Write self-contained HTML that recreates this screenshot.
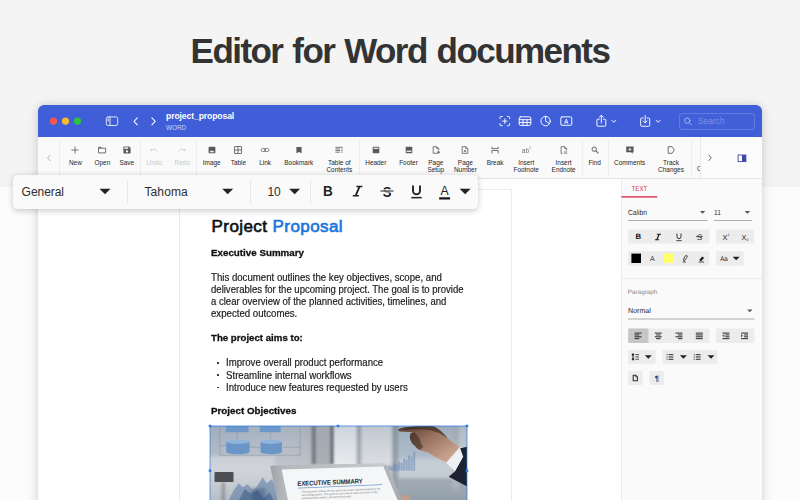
<!DOCTYPE html>
<html lang="en">
<head>
<meta charset="utf-8">
<title>Editor for Word documents</title>
<style>
*{box-sizing:border-box;margin:0;padding:0}
html,body{width:800px;height:500px;overflow:hidden}
body{position:relative;background:#fcfcfc;font-family:"Liberation Sans",sans-serif;color:#333}
.abs{position:absolute}
svg{display:block;overflow:visible}
#topband{left:0;top:0;width:800px;height:187px;background:#f4f4f4}
#hero{left:0;top:29px;width:800px;text-align:center;font-weight:bold;font-size:35px;line-height:44px;color:#333;letter-spacing:-1.55px;word-spacing:1.7px;white-space:nowrap}
#win{left:38px;top:105px;width:724px;height:420px;border-radius:6px 6px 0 0;background:#fff;box-shadow:0 0 8px rgba(0,0,0,.13),0 3px 16px rgba(0,0,0,.07)}
#winclip{left:0;top:0;width:724px;height:420px;border-radius:6px 6px 0 0;overflow:hidden}
#titlebar{left:0;top:0;width:724px;height:31.5px;background:#3f5ed8;color:#fff}
.tl{width:7.2px;height:7.2px;border-radius:50%;top:12.4px}
#fname{left:128px;top:5.5px;font-size:8.6px;line-height:11px;font-weight:bold;letter-spacing:-.1px;white-space:nowrap}
#ftype{left:128px;top:18.5px;font-size:6.4px;line-height:8px;color:rgba(255,255,255,.72);white-space:nowrap}
#search{left:641px;top:8px;width:76px;height:16.5px;border:1px solid rgba(255,255,255,.17);border-radius:3.5px;background:rgba(255,255,255,.02)}
#search span{position:absolute;left:18px;top:2px;font-size:8.4px;line-height:10px;color:rgba(255,255,255,.33)}
#tb{left:0;top:32px;width:724px;height:42px;background:#fafafa;border-bottom:1px solid #e4e4e4}
.ti{position:absolute;top:0;width:0;height:42px;font-size:6.45px;line-height:6.9px;color:#262626;white-space:nowrap;text-align:center}
.ti svg{position:absolute;left:-6px;top:7px;width:12px;height:12px}
.ti span{position:absolute;left:-30px;width:60px;top:22.7px;display:block;text-align:center}
.ti.dis{color:#c9c9c9}
.vd{position:absolute;top:3px;width:1px;height:36px;background:#eeeeee}
.ft{top:10px;line-height:14px;color:#2e2e2e;white-space:nowrap;letter-spacing:-.25px}
.dl{white-space:nowrap;color:#1a1a1a}
.dl.p{-webkit-text-stroke:.18px currentColor}
.dl.h2{font-weight:bold;color:#111;-webkit-text-stroke:.3px currentColor}
.dl.h1{-webkit-text-stroke:.65px currentColor}
</style>
</head>
<body>
<div id="topband" class="abs"></div>
<div id="hero" class="abs">Editor for Word documents</div>
<div id="win" class="abs"><div id="winclip" class="abs">
  <div id="titlebar" class="abs">
    <svg class="abs" style="left:0;top:0" width="724" height="32" viewBox="0 0 724 32" fill="none" stroke="#fff" stroke-width="1" stroke-linecap="round" stroke-linejoin="round">
      <g stroke="none"><circle cx="15.500" cy="16.100" r="3.600" fill="#f7574f"/><circle cx="27.500" cy="16.100" r="3.600" fill="#fbbb2d"/><circle cx="39.500" cy="16.100" r="3.600" fill="#2bc640"/></g>
      <!-- sidebar icon -->
      <g stroke-width=".9" opacity=".9"><rect x="68.3" y="11.9" width="11.4" height="8.6" rx="1.8"/><path d="M72 12v8.4M69.8 14.2h1M69.8 15.8h1"/></g>
      <!-- nav chevrons -->
      <path d="M99.3 12.8L96 16.3l3.3 3.5M113.9 12.8l3.3 3.5-3.3 3.5" stroke-width="1.05"/>
      <!-- viewfinder plus -->
      <g stroke-width=".95"><path d="M462 13.6v-1.2q0-.9.9-.9h1.3M469.4 11.5h1.3q.9 0 .9.9v1.2M471.6 18.6v1.2q0 .9-.9.9h-1.3M464.2 20.7h-1.3q-.9 0-.9-.9v-1.2M466.8 13.9v4.4M464.6 16.1h4.4"/></g>
      <!-- table -->
      <g stroke-width=".95"><rect x="481.2" y="11.8" width="11.6" height="8.6" rx="1.4"/><path d="M481.2 14.7h11.6M481.2 17.5h11.6M485 14.7v5.7M489 14.7v5.7"/></g>
      <!-- pie -->
      <g stroke-width=".95"><circle cx="507.600" cy="16.100" r="4.700"/><path d="M507.600 11.300v4.800l4.100 2.500"/></g>
      <!-- text box -->
      <g stroke-width=".95"><rect x="522.8" y="11.9" width="11" height="8.4" rx="1.2"/><path d="M526.7 18.6l1.6-4.6 1.6 4.6M527.2 17.2h2.2" stroke-width=".8"/></g>
      <!-- share -->
      <g stroke-width=".95"><path d="M561.3 14.2h-1.4q-1 0-1 1v5q0 1 1 1h6.9q1 0 1-1v-5q0-1-1-1h-1.4M563.3 17.8v-7.3M561.4 12.2l1.9-1.9 1.9 1.9"/></g>
      <path d="M574 15.4l1.9 1.9 1.9-1.900" stroke-width="1"/>
      <!-- download -->
      <g stroke-width=".95"><path d="M605.3 13h-1.6q-1 0-1 1v6.300q0 1 1 1h7q1 0 1-1V14q0-1-1-1h-1.600M607.200 10.400v7.400M605.300 16l1.900 1.900 1.900-1.900"/></g>
      <path d="M618.200 15.400l1.900 1.900 1.900-1.900" stroke-width="1"/>
      <!-- magnifier -->
      <g stroke-width=".95" opacity=".55"><circle cx="649.2" cy="15.600" r="2.700"/><path d="M651.200 17.700l2.300 2.300"/></g>
    </svg>
    <div id="fname" class="abs">project_proposal</div>
    <div id="ftype" class="abs">WORD</div>
    <div id="search" class="abs"><span>Search</span></div>
  </div>
  <div id="tb" class="abs">
<div class="vd" style="left:20.5px"></div>
<div class="vd" style="left:102.4px"></div>
<div class="vd" style="left:158.1px"></div>
<div class="vd" style="left:320.9px"></div>
<div class="vd" style="left:544.0px"></div>
<div class="vd" style="left:569.8px"></div>
<div class="vd" style="left:653.4px"></div>
<div class="ti" style="left:37.4px"><svg viewBox="0 0 12 12" fill="none" stroke="#5a5a5a" stroke-width=".85" stroke-linejoin="round" ><path d="M6 2.4v7.200M2.400 6h7.200" stroke-width=".8"/></svg><span>New</span></div>
<div class="ti" style="left:64.4px"><svg viewBox="0 0 12 12" fill="none" stroke="#5a5a5a" stroke-width=".85" stroke-linejoin="round" ><path d="M2.500 3.300h2.400l.9.900h3.800v4.700H2.500z"/><path d="M2.500 4.200h3.300" stroke-width=".9"/></svg><span>Open</span></div>
<div class="ti" style="left:88.8px"><svg viewBox="0 0 12 12" fill="none" stroke="#5a5a5a" stroke-width=".85" stroke-linejoin="round" ><path d="M2.400 3.200q0-.8.800-.8h4.900l1.500 1.500v4.900q0 .8-.8.800H3.200q-.8 0-.8-.8z" fill="#5a5a5a" stroke="none"/><rect x="3.300" y="3.300" width="3.900" height="1.500" fill="#fafafa" stroke="none"/><circle cx="6" cy="7.400" r="1.150" fill="#fafafa" stroke="none"/></svg><span>Save</span></div>
<div class="ti dis" style="left:116.3px"><svg viewBox="0 0 12 12" fill="none" stroke="#cfcfcf" stroke-width=".9"><path d="M3.200 6.300Q6.300 3.600 9.500 7.300"/><path d="M2.300 4.300v2.600h2.600z" fill="#cfcfcf" stroke="none"/></svg><span>Undo</span></div>
<div class="ti dis" style="left:144.3px"><svg viewBox="0 0 12 12" fill="none" stroke="#cfcfcf" stroke-width=".9"><path d="M8.800 6.300Q5.700 3.600 2.500 7.300"/><path d="M9.700 4.300v2.600H7.100z" fill="#cfcfcf" stroke="none"/></svg><span>Redo</span></div>
<div class="ti" style="left:173.7px"><svg viewBox="0 0 12 12" fill="none" stroke="#5a5a5a" stroke-width=".85" stroke-linejoin="round" ><rect x="2.600" y="2.700" width="6.800" height="6.600" rx=".9" fill="#5a5a5a" stroke="none"/><path d="M3.600 8.200l1.500-1.900 1.100 1.300.8-1 1.500 1.600z" fill="#fafafa" stroke="none"/></svg><span>Image</span></div>
<div class="ti" style="left:200.4px"><svg viewBox="0 0 12 12" fill="none" stroke="#5a5a5a" stroke-width=".85" stroke-linejoin="round" ><rect x="2.500" y="2.500" width="7" height="7" rx=".5"/><path d="M6 2.500v7M2.500 6h7"/></svg><span>Table</span></div>
<div class="ti" style="left:227.2px"><svg viewBox="0 0 12 12" fill="none" stroke="#5a5a5a" stroke-width=".85" stroke-linejoin="round" ><rect x="2.200" y="4.500" width="4.300" height="3" rx="1.500" stroke-width=".7"/><rect x="5.500" y="4.500" width="4.300" height="3" rx="1.500" stroke-width=".7"/></svg><span>Link</span></div>
<div class="ti" style="left:260.8px"><svg viewBox="0 0 12 12" fill="none" stroke="#5a5a5a" stroke-width=".85" stroke-linejoin="round" ><path d="M3.400 3.100h5.200v6.100L6 8 3.400 9.200z" fill="#5a5a5a" stroke="none"/></svg><span>Bookmark</span></div>
<div class="ti" style="left:301.3px"><svg viewBox="0 0 12 12" fill="none" stroke="#5a5a5a" stroke-width=".85" stroke-linejoin="round" ><path d="M2.400 3.300h7.200M2.400 4.900h4.600M2.400 6.500h4.600M2.400 8.200h4.600M8.300 4.900h1.300M8.300 6.500h1.300M8.300 8.200h1.300" stroke-width=".8"/></svg><span>Table of<br>Contents</span></div>
<div class="ti" style="left:337.8px"><svg viewBox="0 0 12 12" fill="none" stroke="#5a5a5a" stroke-width=".85" stroke-linejoin="round" ><rect x="2.700" y="2.700" width="6.600" height="6.600" rx=".7" fill="#5a5a5a" stroke="none"/><rect x="3.600" y="3.700" width="4.800" height="1.300" fill="#e8e8e8" stroke="none"/></svg><span>Header</span></div>
<div class="ti" style="left:370.5px"><svg viewBox="0 0 12 12" fill="none" stroke="#5a5a5a" stroke-width=".85" stroke-linejoin="round" ><rect x="2.700" y="2.700" width="6.600" height="6.600" rx=".7" fill="#5a5a5a" stroke="none"/><rect x="3.600" y="6.600" width="4.800" height="1.400" fill="#e8e8e8" stroke="none"/></svg><span>Footer</span></div>
<div class="ti" style="left:397.8px"><svg viewBox="0 0 12 12" fill="none" stroke="#5a5a5a" stroke-width=".85" stroke-linejoin="round" ><path d="M7.600 9.300H3.200V2.700h3.500l2 2v1.800" stroke-width=".8"/><path d="M6.700 2.700v2h2" stroke-width=".7"/><circle cx="8.500" cy="8.300" r="1.250" fill="#5a5a5a" stroke="none" opacity=".85"/></svg><span>Page<br>Setup</span></div>
<div class="ti" style="left:427.4px"><svg viewBox="0 0 12 12" fill="none" stroke="#5a5a5a" stroke-width=".85" stroke-linejoin="round" ><path d="M3.200 2.700h3.600l2 2v4.600H3.200z" stroke-width=".8"/><path d="M6.700 2.700v2h2" stroke-width=".7"/><rect x="4.900" y="6" width="2.200" height="1.900" fill="#5a5a5a" stroke="none" opacity=".7"/></svg><span>Page<br>Number</span></div>
<div class="ti" style="left:457.1px"><svg viewBox="0 0 12 12" fill="none" stroke="#5a5a5a" stroke-width=".85" stroke-linejoin="round" ><path d="M2.900 2.700v1.900h6.300V2.700M2.900 9.500V6.500h6.300v3" stroke-width=".85"/></svg><span>Break</span></div>
<div class="ti" style="left:488.2px"><svg viewBox="0 0 12 12"><text x="1.800" y="8.800" font-family="Liberation Sans,sans-serif" font-size="6.600" fill="#5a5a5a" opacity=".85">ab</text><text x="8.900" y="5.200" font-family="Liberation Sans,sans-serif" font-size="3.600" fill="#5a5a5a">1</text></svg><span>Insert<br>Footnote</span></div>
<div class="ti" style="left:525.6px"><svg viewBox="0 0 12 12" fill="none" stroke="#5a5a5a" stroke-width=".85" stroke-linejoin="round" ><path d="M4.600 9.400H3.100V2.700h3.600l2 2v1.600" stroke-width=".8"/><path d="M6.700 2.700v2h2" stroke-width=".7"/><path d="M5.900 7.400h3.300M5.900 8.500h3.300M5.900 9.600h3.300" stroke-width=".6" opacity=".75"/></svg><span>Insert<br>Endnote</span></div>
<div class="ti" style="left:556.7px"><svg viewBox="0 0 12 12" fill="none" stroke="#5a5a5a" stroke-width=".85" stroke-linejoin="round" ><circle cx="5.200" cy="5.200" r="2.200" stroke-width=".95"/><path d="M6.900 6.900l2.500 2.500" stroke-width="1.050"/></svg><span>Find</span></div>
<div class="ti" style="left:591.6px"><svg viewBox="0 0 12 12" fill="none" stroke="#5a5a5a" stroke-width=".85" stroke-linejoin="round" ><path d="M2.200 2.600h7.400v5.600H8.400l1.200 1.500-3-1.500H2.200z" fill="#5a5a5a" stroke="none"/><path d="M5.900 3.900v3M4.400 5.400h3" stroke="#fafafa" stroke-width=".8"/></svg><span>Comments</span></div>
<div class="ti" style="left:633.0px"><svg viewBox="0 0 12 12" fill="none" stroke="#5a5a5a" stroke-width=".85" stroke-linejoin="round" ><path d="M3.200 2.700h3.900l2.300 3.300-2.300 3.300H3.200z" stroke-width=".85"/></svg><span>Track<br>Changes</span></div>
<div class="ti" style="left:664.5px;width:0"><span style="left:-5.600px;width:8.500px;overflow:hidden;text-align:left;top:28.900px">Compare</span></div>
<svg class="abs" style="left:0;top:0" width="724" height="42" viewBox="0 0 724 42" fill="none" stroke-linecap="round" stroke-linejoin="round"><path d="M12.100 18.300l-2.500 2.700 2.500 2.700" stroke="#a8a8a8" stroke-width=".9"/></svg>
<div class="abs" style="left:662px;top:0;width:62px;height:41px;background:#fbfbfb;border-left:1px solid #e9e9e9"></div>
<svg class="abs" style="left:0;top:0" width="724" height="42" viewBox="0 0 724 42" fill="none" stroke-linecap="round" stroke-linejoin="round"><path d="M670.800 18.100l2.500 2.700-2.500 2.700" stroke="#555" stroke-width=".9"/><rect x="700.100" y="18" width="7.800" height="6.600" fill="#fff" stroke="#3d47a8" stroke-width=".9" stroke-linejoin="miter"/><rect x="704" y="18" width="3.900" height="6.600" fill="#3d47a8"/></svg>

  </div>
<div class="abs" style="left:140.5px;top:83.5px;width:333.8px;height:340px;border:1px solid #ebebeb;background:#fff"></div>
<div class="abs dl h1" id="dl0" style="left:173.60px;top:110.73px;font-size:17.0px;line-height:22.1px;letter-spacing:0.415px"><span style="color:#111">Project</span> <span style="color:#1976e0">Proposal</span></div>
<div class="abs dl h2" id="dl1" style="left:172.60px;top:142.39px;font-size:9.8px;line-height:12.74px;letter-spacing:0.000px;transform:scaleX(0.9987);transform-origin:0 0">Executive Summary</div>
<div class="abs dl p" id="dl2" style="left:172.60px;top:165.74px;font-size:10.05px;line-height:13.07px;letter-spacing:0.000px;transform:scaleX(0.9592);transform-origin:0 0">This document outlines the key objectives, scope, and</div>
<div class="abs dl p" id="dl3" style="left:172.60px;top:177.64px;font-size:10.05px;line-height:13.07px;letter-spacing:0.000px;transform:scaleX(0.9509);transform-origin:0 0">deliverables for the upcoming project. The goal is to provide</div>
<div class="abs dl p" id="dl4" style="left:172.60px;top:189.54px;font-size:10.05px;line-height:13.07px;letter-spacing:0.000px;transform:scaleX(0.9493);transform-origin:0 0">a clear overview of the planned activities, timelines, and</div>
<div class="abs dl p" id="dl5" style="left:172.60px;top:201.54px;font-size:10.05px;line-height:13.07px;letter-spacing:0.000px;transform:scaleX(0.9597);transform-origin:0 0">expected outcomes.</div>
<div class="abs dl h2" id="dl6" style="left:172.60px;top:227.19px;font-size:9.8px;line-height:12.74px;letter-spacing:0.000px;transform:scaleX(0.9861);transform-origin:0 0">The project aims to:</div>
<div class="abs dl p" id="dl7" style="left:187.80px;top:251.44px;font-size:10.05px;line-height:13.07px;letter-spacing:0.000px;transform:scaleX(0.9574);transform-origin:0 0">Improve overall product performance</div>
<div class="abs dl p" id="dl8" style="left:187.80px;top:263.54px;font-size:10.05px;line-height:13.07px;letter-spacing:0.000px;transform:scaleX(0.9620);transform-origin:0 0">Streamline internal workflows</div>
<div class="abs dl p" id="dl9" style="left:187.80px;top:275.64px;font-size:10.05px;line-height:13.07px;letter-spacing:0.000px;transform:scaleX(0.9540);transform-origin:0 0">Introduce new features requested by users</div>
<div class="abs dl h2" id="dl10" style="left:172.60px;top:299.79px;font-size:9.8px;line-height:12.74px;letter-spacing:0.000px;transform:scaleX(0.9988);transform-origin:0 0">Project Objectives</div>
<div class="abs" style="left:179.2px;top:257.3px;width:1.7px;height:1.7px;border-radius:50%;background:#222"></div>
<div class="abs" style="left:179.2px;top:269.4px;width:1.7px;height:1.7px;border-radius:50%;background:#222"></div>
<div class="abs" style="left:179.2px;top:281.5px;width:1.7px;height:1.7px;border-radius:50%;background:#222"></div>
<svg class="abs" style="left:172.3px;top:320.8px" width="257.0" height="86.2" viewBox="210.3 425.8 257.0 86.2" font-family="Liberation Sans,sans-serif">
<defs>
<linearGradient id="bgA" x1="0" x2="1" y1="0" y2="0"><stop offset="0" stop-color="#a7b1c0"/><stop offset=".25" stop-color="#b4bcc8"/><stop offset=".37" stop-color="#b3b7bd"/><stop offset=".46" stop-color="#a9adb3"/><stop offset=".5" stop-color="#e4e6e8"/><stop offset=".62" stop-color="#cfd3d7"/><stop offset=".75" stop-color="#a9b7c4"/><stop offset="1" stop-color="#97a6b4"/></linearGradient>
<linearGradient id="bgB" x1="0" x2="0" y1="0" y2="1"><stop offset="0" stop-color="#8fa0b2" stop-opacity=".35"/><stop offset=".5" stop-color="#e6e8ea" stop-opacity=".25"/><stop offset="1" stop-color="#7f8c98" stop-opacity=".45"/></linearGradient>
<linearGradient id="bez" x1="0" x2="1" y1="0" y2="0"><stop offset="0" stop-color="#9fa3a8"/><stop offset=".1" stop-color="#b4b7bb"/><stop offset=".9" stop-color="#c9cbce"/><stop offset="1" stop-color="#8e9398"/></linearGradient>
<linearGradient id="skin" x1="0" x2="1" y1="0" y2="1"><stop offset="0" stop-color="#4e372d"/><stop offset=".4" stop-color="#96705d"/><stop offset=".75" stop-color="#c09a85"/><stop offset="1" stop-color="#d6b5a2"/></linearGradient>
<filter id="b1" x="-10%" y="-10%" width="120%" height="120%"><feGaussianBlur stdDeviation="1.600"/></filter>
<filter id="b2" x="-10%" y="-10%" width="120%" height="120%"><feGaussianBlur stdDeviation=".55"/></filter>
<filter id="b4" x="-30%" y="-10%" width="160%" height="120%"><feGaussianBlur stdDeviation=".9"/></filter>
<filter id="b3" x="-10%" y="-10%" width="120%" height="120%"><feGaussianBlur stdDeviation=".3"/></filter>
<clipPath id="imgclip"><rect x="210.300" y="425.800" width="257" height="90"/></clipPath>
</defs>
<g clip-path="url(#imgclip)">
<rect x="210.3" y="425.8" width="257.0" height="86.19999999999999" fill="url(#bgA)"/>
<g filter="url(#b1)">
<rect x="333" y="420" width="24" height="48" fill="#eceef0"/>
<rect x="361" y="420" width="31" height="44" fill="#d9dcdf"/>
<rect x="357" y="420" width="4.500" height="60" fill="#8d949c"/>
<rect x="392.500" y="420" width="6" height="70" fill="#7f8993"/>
<rect x="399" y="420" width="55" height="40" fill="#a3b3c3"/>
<rect x="399" y="458" width="60" height="22" fill="#bcc6ce"/>
<rect x="399" y="478" width="70" height="30" fill="#8d9aa6"/>
<rect x="453" y="420" width="6" height="70" fill="#a4abb2"/>
<rect x="459" y="420" width="10" height="30" fill="#c0c7ce"/>
<rect x="205" y="456" width="70" height="50" fill="#c9cdd3"/>
</g><g filter="url(#b2)"><rect x="214.800" y="471.800" width="19" height="10" rx="1" fill="#14171b"/></g><g filter="url(#b1)">
<rect x="222" y="482" width="3" height="20" fill="#3a3f46" opacity=".6"/>
<rect x="252" y="488" width="14" height="14" fill="#2f3f55" opacity=".7"/>
</g>
<rect x="210.3" y="425.8" width="257.0" height="86.19999999999999" fill="url(#bgB)"/>
<g filter="url(#b4)"><rect x="311.800" y="424" width="4.600" height="40" fill="#6e757e" opacity=".85"/><rect x="330.300" y="424" width="3.600" height="40" fill="#626972" opacity=".9"/><rect x="316.400" y="424" width="14" height="40" fill="#a3a8ae" opacity=".7"/></g>
<g filter="url(#b3)">
<path d="M220 426v29h80.500V426M220 445.500h6.500M250 447h11M282 447h18.500M237.500 432v7M271 432v7" fill="none" stroke="#8492a5" stroke-width=".55"/>
<rect x="226" y="424" width="22.800" height="8" fill="#6d98c8"/><rect x="260" y="424" width="21" height="8" fill="#6d98c8"/>
<path d="M226.5 441.500v10.300a11.7 2.200 0 0 0 23.4 0v-10.300z" fill="#6a96c7"/><ellipse cx="238.2" cy="441.500" rx="11.7" ry="2.200" fill="#8fb3d9"/>
<path d="M260.8 441.500v10.300a10.7 2.200 0 0 0 21.4 0v-10.300z" fill="#6a96c7"/><ellipse cx="271.5" cy="441.500" rx="10.7" ry="2.200" fill="#8fb3d9"/>
</g>
<g filter="url(#b2)">
<path d="M226 506l8-16 5-7 4 4 5-3 6 7 4-6 5-8 4 6 5-4 7 12 3 18z" fill="#4a6f9f" opacity=".5"/>
<path d="M236 506l9-17 6 4 7-3 6 8 6-6 8 17z" fill="#2c4a78" opacity=".45"/>
<rect x="386" y="467.0" width="2" height="3.5" fill="#5d86b8" opacity=".5"/>
<rect x="388.5" y="465.5" width="2" height="5" fill="#5d86b8" opacity=".5"/>
<rect x="391" y="466.5" width="2" height="4" fill="#5d86b8" opacity=".5"/>
<rect x="393.5" y="463.5" width="2" height="7" fill="#5d86b8" opacity=".5"/>
<rect x="396" y="464.5" width="2" height="6" fill="#5d86b8" opacity=".5"/>
<rect x="398.5" y="461.5" width="2" height="9" fill="#5d86b8" opacity=".5"/>
<rect x="401" y="462.5" width="2" height="8" fill="#5d86b8" opacity=".5"/>
<rect x="403.5" y="458.5" width="2" height="12" fill="#5d86b8" opacity=".5"/>
<rect x="406" y="459.5" width="2" height="11" fill="#5d86b8" opacity=".5"/>
<rect x="408.5" y="455.5" width="2" height="15" fill="#5d86b8" opacity=".5"/>
<rect x="411" y="456.5" width="2" height="14" fill="#5d86b8" opacity=".5"/>
<rect x="413.5" y="451.5" width="2" height="19" fill="#5d86b8" opacity=".5"/>
</g>
<g filter="url(#b3)">
<path d="M272.500 465.300q-2.300.1-1.700 2.300l9.200 45h128l-21-47.600q-.9-2-3.100-1.950z" fill="url(#bez)"/>
<path d="M282 469.300l101.700-3.100 19.500 46H290.700z" fill="#f5f6f7"/>
<path d="M383.700 466.200l3.100-1.100 21 47.500h-4.600z" fill="#9a9fa5" opacity=".55"/>
</g>
<g transform="rotate(-2.300 298 485.600)">
<text x="297.800" y="485.700" font-size="6.600" font-weight="bold" fill="#23262b" textLength="65.300" lengthAdjust="spacingAndGlyphs">EXECUTIVE SUMMARY</text>
<rect x="297.800" y="487.500" width="84.600" height=".8" fill="#6e9bd0"/>
<text x="301.500" y="492.800" font-size="2.800" fill="#777" textLength="79" lengthAdjust="spacingAndGlyphs">This document outlines the key objectives, scope, and deliverables for the</text>
<text x="301.500" y="496" font-size="2.800" fill="#777" textLength="76" lengthAdjust="spacingAndGlyphs">upcoming project. The goal is to provide a clear overview of the</text>
<text x="301.500" y="499.200" font-size="2.800" fill="#777" textLength="50" lengthAdjust="spacingAndGlyphs">planned activities, timelines, and expected outcomes.</text>
</g>
<g filter="url(#b3)">
<path d="M398.500 429.300Q400 427.600 404 427.200L414 426.200 424 425.500 434 426Q442 430 448 438L460.500 448 447 462.500Q437 458 429 452.500 424 451.500 420 449.800 416.500 448.500 415.200 445.500 412 443.500 411.200 440.500 409.200 437.500 410.800 434 411.500 432.500 413 432L401 431.300Q398 431 398.500 429.300Z" fill="url(#skin)"/>
<path d="M404 427.200L424 425.500 434 426Q442 430 448 438L440 433Q432 429.500 424 429.200L404 429.400Z" fill="#2e211b" opacity=".55"/>
<path d="M411 433Q409.200 437.500 411.200 440.500 412 443.500 415.200 445.500 416.500 448.500 420 449.800L423.500 446.500Q420.500 443 420 439 418.500 435 414.500 432.200Z" fill="#35251f" opacity=".55"/>
<path d="M446.500 462.500l13.500-15.500 4 .8 3.500 3-12 20.500z" fill="#eef0f3"/>
<path d="M460.500 448l7.500-1.500v40l-19-10 6.500-5.500 8-14.500z" fill="#1c2230"/>
<path d="M403 494.500q4-1 6.500 2.500l4 9h-12z" fill="#c79c86"/>
</g>
</g>
<rect x="210.300" y="425.800" width="257" height="90" fill="none" stroke="#2f7de1" stroke-width=".75"/>
<rect x="209.0" y="424.5" width="2.600" height="2.600" rx=".5" fill="#2f7de1"/>
<rect x="337.0" y="424.5" width="2.600" height="2.600" rx=".5" fill="#2f7de1"/>
<rect x="466.0" y="424.5" width="2.600" height="2.600" rx=".5" fill="#2f7de1"/>
<rect x="209.0" y="469.1" width="2.600" height="2.600" rx=".5" fill="#2f7de1"/>
<rect x="466.0" y="469.1" width="2.600" height="2.600" rx=".5" fill="#2f7de1"/>
</svg>


<div class="abs" style="left:583px;top:74px;width:141px;height:346px;background:#fafafa;border-left:1px solid #ebebeb"></div>
<svg class="abs" style="left:583px;top:74px" width="141" height="330" viewBox="621 179 141 330" fill="none" font-family="Liberation Sans,sans-serif" text-rendering="geometricPrecision">
<rect x="621.500" y="196.200" width="35.700" height="1.400" fill="#d9304f"/>
<text x="631.600" y="190.500" font-size="7" fill="#d9304f" textLength="15.800" lengthAdjust="spacingAndGlyphs">TEXT</text>
<text x="628" y="215" font-size="7.400" fill="#2a2a2a" textLength="19" lengthAdjust="spacingAndGlyphs">Calibri</text>
<path d="M699.90 211.00h5.4l-2.7 2.8z" fill="#555"/>
<rect x="628" y="220.200" width="79.400" height=".8" fill="#9a9a9a"/>
<text x="714" y="215" font-size="7.400" fill="#2a2a2a" textLength="6.800" lengthAdjust="spacingAndGlyphs">11</text>
<path d="M744.70 211.00h5.4l-2.7 2.8z" fill="#555"/>
<rect x="714" y="220.200" width="38.200" height=".8" fill="#9a9a9a"/>
<rect x="628" y="229.400" width="81.400" height="14.200" rx="1" fill="#ececec"/>
<rect x="716" y="229.400" width="38" height="14.200" rx="1" fill="#ececec"/>
<text x="638.200" y="239.400" text-anchor="middle" font-size="7.800" font-weight="bold" fill="#111">B</text>
<path d="M656.800 233.700h4.200v1h-1.400l-1.900 4.500h1.400v1h-4.200v-1h1.400l1.900-4.500h-1.400z" fill="#222"/>
<path d="M677 233.600v3a2 2 0 0 0 4 0v-3" stroke="#222" stroke-width=".95"/><rect x="676.300" y="240.300" width="5.400" height=".8" fill="#222"/>
<text x="699.400" y="239.700" text-anchor="middle" font-size="8.200" fill="#222">S</text><rect x="695.900" y="236.350" width="7" height=".7" fill="#222"/>
<text x="722.500" y="239.800" font-size="7.400" fill="#222">X</text><text x="727.600" y="236.300" font-size="3.600" fill="#222">2</text>
<text x="741.500" y="239.800" font-size="7.400" fill="#222">X</text><text x="746.600" y="241" font-size="3.600" fill="#222">2</text>
<rect x="628" y="251.200" width="81.400" height="14.200" rx="1" fill="#ececec"/>
<rect x="716" y="251.200" width="27.600" height="14.200" rx="1" fill="#ececec"/>
<rect x="631.400" y="253.600" width="9.600" height="9.400" fill="#000"/>
<text x="652.400" y="261" text-anchor="middle" font-size="7" fill="#222">A</text>
<rect x="664" y="253.600" width="10" height="9.400" fill="#ffff66"/>
<path d="M683.300 260.300l1.600-4 1.500-1 .9.600-.5 1.700-2.500 3.300zM682.600 262h3.400" stroke="#222" stroke-width=".8" stroke-linejoin="round"/>
<path d="M699.500 259.400l2.800-3 1.800 1.600-2.800 3.100h-1.300z" fill="#222"/><path d="M698.700 262h5.400" stroke="#222" stroke-width=".8"/>
<text x="720.200" y="260.900" font-size="6.800" fill="#222" textLength="7.600" lengthAdjust="spacingAndGlyphs">Aa</text>
<path d="M732.70 256.65h7l-3.5 3.5z" fill="#222"/>
<rect x="621.500" y="278" width="140.500" height=".8" fill="#e9e9e9"/>
<text x="627.800" y="293.600" font-size="6.300" fill="#8a8a8a" textLength="29.600" lengthAdjust="spacingAndGlyphs">Paragraph</text>
<text x="628" y="313.300" font-size="7.200" fill="#2a2a2a" textLength="22.900" lengthAdjust="spacingAndGlyphs">Normal</text>
<path d="M747.10 309.50h5.4l-2.7 2.8z" fill="#555"/>
<rect x="628" y="318.600" width="126.500" height=".8" fill="#9a9a9a"/>
<rect x="628.200" y="328.600" width="81.300" height="14.300" rx="1" fill="#ececec"/>
<rect x="628.200" y="328.600" width="20.300" height="14.300" rx="1" fill="#c6c6c6"/>
<rect x="716.200" y="328.600" width="38.300" height="14.300" rx="1" fill="#ececec"/>
<rect x="634.60" y="332.60" width="7" height="1" fill="#2a2a2a"/><rect x="634.60" y="334.45" width="4.6" height="1" fill="#2a2a2a"/><rect x="634.60" y="336.30" width="7" height="1" fill="#2a2a2a"/><rect x="634.60" y="338.15" width="4.6" height="1" fill="#2a2a2a"/>
<rect x="654.80" y="332.60" width="7" height="1" fill="#2a2a2a"/><rect x="656.10" y="334.45" width="4.4" height="1" fill="#2a2a2a"/><rect x="654.80" y="336.30" width="7" height="1" fill="#2a2a2a"/><rect x="656.10" y="338.15" width="4.4" height="1" fill="#2a2a2a"/>
<rect x="675.50" y="332.60" width="7" height="1" fill="#2a2a2a"/><rect x="677.90" y="334.45" width="4.6" height="1" fill="#2a2a2a"/><rect x="675.50" y="336.30" width="7" height="1" fill="#2a2a2a"/><rect x="677.90" y="338.15" width="4.6" height="1" fill="#2a2a2a"/>
<rect x="695.80" y="332.60" width="7" height="1" fill="#2a2a2a"/><rect x="695.80" y="334.45" width="7" height="1" fill="#2a2a2a"/><rect x="695.80" y="336.30" width="7" height="1" fill="#2a2a2a"/><rect x="695.80" y="338.15" width="7" height="1" fill="#2a2a2a"/>
<rect x="722.40" y="332.60" width="7" height="1" fill="#2a2a2a"/><rect x="725.40" y="334.45" width="4" height="1" fill="#2a2a2a"/><rect x="725.40" y="336.30" width="4" height="1" fill="#2a2a2a"/><rect x="722.40" y="338.15" width="7" height="1" fill="#2a2a2a"/><path d="M724.30 334.30v3l-1.900-1.500z" fill="#333"/>
<rect x="741.10" y="332.60" width="7" height="1" fill="#2a2a2a"/><rect x="744.10" y="334.45" width="4" height="1" fill="#2a2a2a"/><rect x="744.10" y="336.30" width="4" height="1" fill="#2a2a2a"/><rect x="741.10" y="338.15" width="7" height="1" fill="#2a2a2a"/><path d="M741.10 334.30v3l1.900-1.500z" fill="#333"/>
<rect x="628.200" y="350" width="27.400" height="13.800" rx="1" fill="#ececec"/>
<rect x="662.600" y="350" width="54.700" height="13.800" rx="1" fill="#ececec"/>
<path d="M633 354v5.800M631.900 355.100l1.100-1.300 1.100 1.300M631.900 358.700l1.100 1.300 1.100-1.300" stroke="#222" stroke-width="1.050"/>
<path d="M635.400 354.600h3.600M635.400 356.900h3.600M635.400 359.200h3.600" stroke="#333" stroke-width=".85"/>
<path d="M644.80 355.15h7l-3.5 3.5z" fill="#222"/>
<rect x="666.600" y="354.1" width="1" height="1" fill="#333"/><rect x="668.600" y="354.18" width="4.800" height="1" fill="#2a2a2a"/>
<rect x="666.600" y="356.4" width="1" height="1" fill="#333"/><rect x="668.600" y="356.47999999999996" width="4.800" height="1" fill="#2a2a2a"/>
<rect x="666.600" y="358.7" width="1" height="1" fill="#333"/><rect x="668.600" y="358.78" width="4.800" height="1" fill="#2a2a2a"/>
<path d="M679.90 355.15h7l-3.5 3.5z" fill="#222"/>
<rect x="693.800" y="354.0" width=".8" height="1.300" fill="#333"/><rect x="695.800" y="354.18" width="4.800" height="1" fill="#2a2a2a"/>
<rect x="693.800" y="356.29999999999995" width=".8" height="1.300" fill="#333"/><rect x="695.800" y="356.47999999999996" width="4.800" height="1" fill="#2a2a2a"/>
<rect x="693.800" y="358.59999999999997" width=".8" height="1.300" fill="#333"/><rect x="695.800" y="358.78" width="4.800" height="1" fill="#2a2a2a"/>
<path d="M707.50 355.15h7l-3.5 3.5z" fill="#222"/>
<rect x="628.200" y="371" width="14.300" height="14.100" rx="1" fill="#ececec"/>
<rect x="649.600" y="371" width="14.300" height="14.100" rx="1" fill="#ececec"/>
<path d="M633.200 375.300h2.700l1.500 1.500v4h-4.200z" stroke="#333" stroke-width="1.100" stroke-linejoin="round"/><path d="M635.700 375.400v1.600h1.600" stroke="#333" stroke-width=".6"/>
<text x="656.800" y="380.700" text-anchor="middle" font-size="7.600" font-weight="bold" fill="#333">¶</text>
</svg>

</div></div>
<div id="float" class="abs" style="left:12.500px;top:175px;width:465px;height:34px;border-radius:4.500px;background:#fafafa;box-shadow:0 1.5px 6px rgba(0,0,0,.2),0 0 1px rgba(0,0,0,.1)">
<div class="abs ft" style="left:9.10px;width:60px;font-size:12px;letter-spacing:-0.05px">General</div>
<div class="abs ft" style="left:131.90px;width:60px;font-size:12px;letter-spacing:0.14px">Tahoma</div>
<div class="abs ft" style="left:255.10px;width:30px;font-size:12px;letter-spacing:-0.25px">10</div>
<div class="abs" style="left:114.4px;top:5px;width:1px;height:24px;background:#e9e9e9"></div>
<div class="abs" style="left:237.0px;top:5px;width:1px;height:24px;background:#e9e9e9"></div>
<div class="abs" style="left:297.5px;top:5px;width:1px;height:24px;background:#e9e9e9"></div>
<svg class="abs" style="left:0;top:0" width="465" height="34" viewBox="12.500 175 465 34" fill="none">
<path d="M99.00 188.65h11l-5.5 5.5z" fill="#222"/>
<path d="M221.70 188.65h11l-5.5 5.5z" fill="#222"/>
<path d="M288.60 188.65h11l-5.5 5.5z" fill="#222"/>
<path d="M459.10 188.65h11l-5.5 5.5z" fill="#222"/>
<text x="327.300" y="196.500" text-anchor="middle" font-family="Liberation Sans,sans-serif" font-weight="bold" font-size="15" fill="#222" transform="translate(327.300 0) scale(.9 1) translate(-327.300 0)">B</text>
<path d="M355.900 185.700h6v1.600h-2.100l-3.400 7.700h2v1.600h-6.100v-1.600h2.100l3.400-7.700h-1.900z" fill="#222"/>
<text x="386.500" y="196.700" text-anchor="middle" font-family="Liberation Sans,sans-serif" font-size="14.200" font-weight="bold" fill="#222" transform="translate(386.500 0) scale(.92 1) translate(-386.500 0)">S</text>
<rect x="380" y="190.300" width="13" height="1.400" fill="#222"/>
<rect x="380" y="189.400" width="13" height=".9" fill="#fafafa"/><rect x="380" y="191.700" width="13" height=".8" fill="#fafafa"/>
<path d="M412.500 185.400v5.400a3.500 3.500 0 0 0 7 0v-5.400" stroke="#222" stroke-width="1.900"/>
<rect x="410.800" y="196.900" width="10.400" height="1.500" fill="#222"/>
<text x="444.100" y="195.200" text-anchor="middle" font-family="Liberation Sans,sans-serif" font-size="12.200" fill="#222">A</text>
<rect x="438.700" y="197.300" width="10.900" height="2.200" fill="#111"/>
</svg>
</div>

</body>
</html>
